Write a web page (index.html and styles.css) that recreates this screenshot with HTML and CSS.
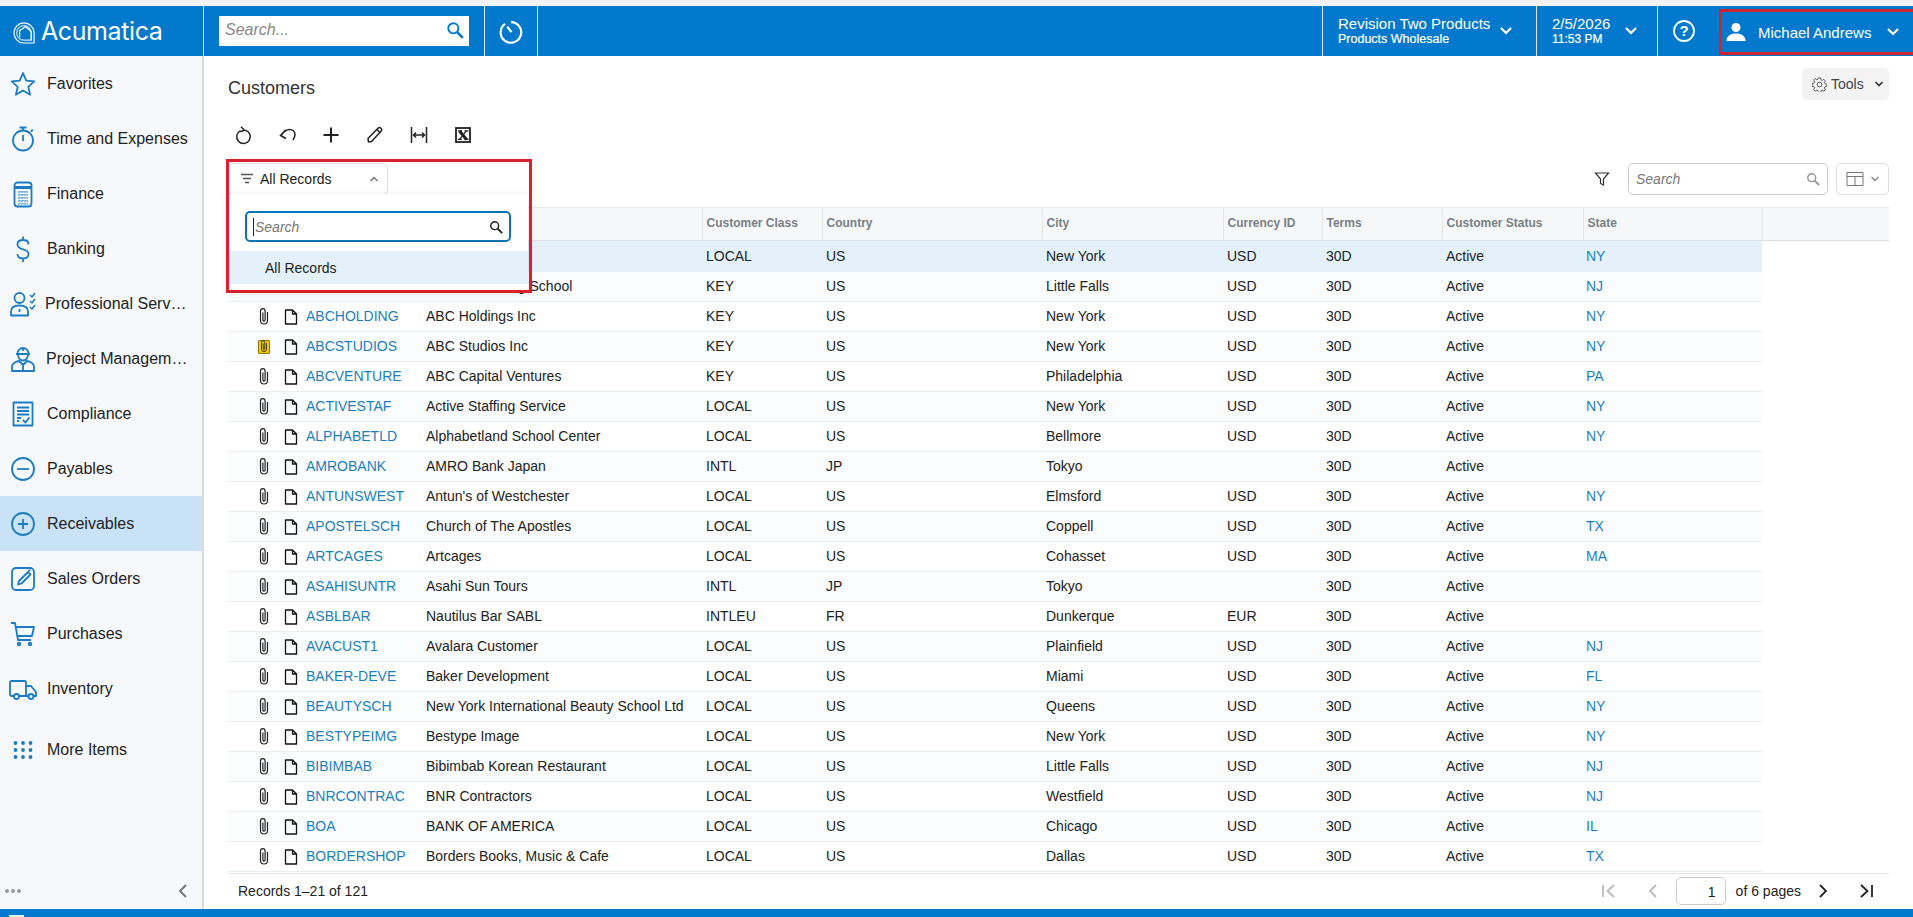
FILE: index.html
```html
<!DOCTYPE html>
<html lang="en">
<head>
<meta charset="utf-8">
<title>Customers</title>
<link rel="stylesheet" href="styles.css">
</head>
<body>
<svg class="defs" aria-hidden="true">
  <symbol id="clip" viewBox="0 0 14 20"><path d="M10.500 6v8.500a3.500 3.500 0 0 1-7 0V5a2.300 2.300 0 0 1 4.600 0v9a1.100 1.100 0 0 1-2.200 0V6.500" fill="none" stroke="currentColor" stroke-width="1.200"/></symbol>
  <symbol id="doc" viewBox="0 0 14 16"><path d="M1.500 1h7l4 4v10h-11zM8.500 1v4h4" fill="none" stroke="currentColor" stroke-width="1.300" stroke-linejoin="round"/></symbol>
  <symbol id="chev" viewBox="0 0 14 10"><path d="M2 2l5 5 5-5" fill="none" stroke="currentColor" stroke-width="2.200"/></symbol>
  <symbol id="mag" viewBox="0 0 16 16"><circle cx="6.500" cy="6.500" r="4.500" fill="none" stroke="currentColor" stroke-width="1.700"/><path d="M10 10l5 5" stroke="currentColor" stroke-width="2.200"/></symbol>
</svg>

<div class="strip"></div>
<header class="topbar">
  <div class="logo">
    <svg class="logo-mark" viewBox="0 0 24 26"><g fill="none" stroke="#fff" stroke-width="1.200"><path d="M22 25H11A10.500 10.500 0 1 1 22 14z"/><path d="M19 22H11.500A7.600 7.600 0 1 1 19 14z" opacity=".8"/><path d="M7 19v-7l6-4 6 5v9"/></g></svg>
    <span class="logo-text">Acumatica</span>
  </div>
  <div class="top-search"><span class="top-search-text">Search...</span><svg class="top-mag"><use href="#mag"/></svg></div>
  <div class="top-history">
    <svg viewBox="0 0 24 24" width="26" height="26"><path d="M6.500 5.500a9.500 9.500 0 1 0 5.500-1.700" fill="none" stroke="#fff" stroke-width="2"/><path d="M8.500 8l4 5" fill="none" stroke="#fff" stroke-width="2"/></svg>
  </div>
  <div class="top-spacer"></div>
  <div class="top-cell cell-branch">
    <div class="two-line"><span class="line-big">Revision Two Products</span><span class="line-small">Products Wholesale</span></div>
    <svg class="chev"><use href="#chev"/></svg>
  </div>
  <div class="top-cell cell-date">
    <div class="two-line"><span class="line-big">2/5/2026</span><span class="line-tiny">11:53 PM</span></div>
    <svg class="chev"><use href="#chev"/></svg>
  </div>
  <div class="top-cell cell-help">
    <svg viewBox="0 0 24 24" width="24" height="24"><circle cx="12" cy="12" r="10" fill="none" stroke="#fff" stroke-width="1.800"/><text x="12" y="17" class="help-q">?</text></svg>
  </div>
  <div class="cell-user">
    <svg viewBox="0 0 22 22" width="22" height="22"><circle cx="11" cy="6.500" r="4.500" fill="#fff"/><path d="M1.500 20c0-5 4-7.500 9.500-7.500s9.500 2.500 9.500 7.500z" fill="#fff"/></svg>
    <span class="user-name">Michael Andrews</span>
    <svg class="chev"><use href="#chev"/></svg>
  </div>
</header>

<div class="main">
  <nav class="sidebar">
    <div class="nav-list">
      <a class="nav-item"><span class="nav-icon"><svg viewBox="0 0 28 28"><path d="M14 3l3.300 7.600 8 .8-6 5.400 1.800 8L14 20.600l-7.100 4.200 1.800-8-6-5.400 8-.8z"/></svg></span><span class="nav-label">Favorites</span></a>
      <a class="nav-item"><span class="nav-icon"><svg viewBox="0 0 28 28"><circle cx="14" cy="15.500" r="10"/><path d="M10.500 2.500h7M14 2.500v3M14 10v6M22 6.500l1.800-1.800"/></svg></span><span class="nav-label">Time and Expenses</span></a>
      <a class="nav-item"><span class="nav-icon"><svg viewBox="0 0 28 28"><rect x="5.500" y="2.500" width="17" height="24" rx="3"/><path d="M6 7.500h16" stroke-width="3"/><path d="M9 12h10M9 15h10M9 18h10M9 21h10M9 24h10M11 11v13M14 11v13M17 11v13" stroke-width="1" stroke-dasharray="1.500 1.500"/></svg></span><span class="nav-label">Finance</span></a>
      <a class="nav-item"><span class="nav-icon"><svg viewBox="0 0 28 28"><path d="M19.500 9.500c0-3-2.500-4.500-5.500-4.500S8.500 6.500 8.500 9.500c0 6.500 11 3.500 11 9.500 0 3-2.500 4.500-5.500 4.500S8.500 22 8.500 19M14 1.500V5M14 23.500V27"/></svg></span><span class="nav-label">Banking</span></a>
      <a class="nav-item nav-tight"><span class="nav-icon"><svg viewBox="0 0 28 28"><circle cx="10.500" cy="8" r="5"/><path d="M2 25.500v-4c0-4 3.500-6 8.500-6s8.500 2 8.500 6v4zM10.500 19v3"/><path d="M21 5l2 2 3-4M21 11l2 2 3-4M21 17l2 2 3-4" stroke-width="1.500"/></svg></span><span class="nav-label">Professional Serv…</span></a>
      <a class="nav-item nav-mid"><span class="nav-icon"><svg viewBox="0 0 28 28"><path d="M8.500 8.500a5.500 5.500 0 0 1 11 0M7 9h14M9 9.500c0 3.500 2.300 6 5 6s5-2.500 5-6M3 26v-4.500c0-3 4-5 7-5.500l4 4 4-4c3 .5 7 2.500 7 5.500V26zM14 20v6M14 3v3"/></svg></span><span class="nav-label">Project Managem…</span></a>
      <a class="nav-item"><span class="nav-icon"><svg viewBox="0 0 28 28"><rect x="4.500" y="2.500" width="19" height="23"/><path d="M8 7.500h12M8 11h12M8 14.500h12M8 18h4M8 21h2M14 20l2.500 2.500 4-5"/></svg></span><span class="nav-label">Compliance</span></a>
      <a class="nav-item"><span class="nav-icon"><svg viewBox="0 0 28 28"><circle cx="14" cy="14" r="11"/><path d="M8 14h12"/></svg></span><span class="nav-label">Payables</span></a>
      <a class="nav-item nav-active"><span class="nav-icon"><svg viewBox="0 0 28 28"><circle cx="14" cy="14" r="11"/><path d="M9 14h10M14 9v10"/></svg></span><span class="nav-label">Receivables</span></a>
      <a class="nav-item"><span class="nav-icon"><svg viewBox="0 0 28 28"><rect x="3" y="3" width="22" height="22" rx="4"/><path d="M9 19.500l1-3.500 9-9 2.500 2.500-9 9zM19 6l2.500-1" /></svg></span><span class="nav-label">Sales Orders</span></a>
      <a class="nav-item"><span class="nav-icon"><svg viewBox="0 0 28 28"><path d="M2 3h4l3 17h13M7 7h18l-2 9H8.500"/><circle cx="10" cy="24" r="1.300"/><circle cx="21" cy="24" r="1.300"/></svg></span><span class="nav-label">Purchases</span></a>
      <a class="nav-item"><span class="nav-icon"><svg viewBox="0 0 28 28"><path d="M5 21H2.500A1.500 1.500 0 0 1 1 19.500V7.500A1.500 1.500 0 0 1 2.500 6h13a1.500 1.500 0 0 1 1.500 1.500V21h-7M17 11h5l5 6v4h-2.500M17 21h2.500"/><circle cx="7.500" cy="21.500" r="2.500"/><circle cx="22" cy="21.500" r="2.500"/></svg></span><span class="nav-label">Inventory</span></a>
      <a class="nav-item nav-more"><span class="nav-icon"><svg viewBox="0 0 28 28"><g class="dots"><circle cx="6.500" cy="7" r="1.900"/><circle cx="14" cy="7" r="1.900"/><circle cx="21.500" cy="7" r="1.900"/><circle cx="6.500" cy="14" r="1.900"/><circle cx="14" cy="14" r="1.900"/><circle cx="21.500" cy="14" r="1.900"/><circle cx="6.500" cy="21" r="1.900"/><circle cx="14" cy="21" r="1.900"/><circle cx="21.500" cy="21" r="1.900"/></g></svg></span><span class="nav-label">More Items</span></a>
    </div>
    <div class="nav-foot">
      <span class="foot-dots"><i></i><i></i><i></i></span>
      <svg viewBox="0 0 10 16" width="10" height="16"><path d="M8 2L2 8l6 6" fill="none" stroke="#777" stroke-width="2"/></svg>
    </div>
  </nav>

  <section class="content">
    <div class="title-row">
      <h1 class="page-title">Customers</h1>
      <button class="tools-btn">
        <svg viewBox="0 0 16 16" width="15" height="15"><g fill="none" stroke="#555" stroke-width="1"><circle cx="8" cy="8" r="2.500"/><path d="M6.800 1h2.400l.4 2 1.300.6 1.700-1.100 1.700 1.700-1.100 1.700.6 1.300 2 .4v2.400l-2 .4-.6 1.300 1.100 1.700-1.700 1.700-1.700-1.100-1.300.6-.4 2H6.800l-.4-2-1.300-.6-1.700 1.100-1.700-1.700 1.100-1.700-.6-1.300-2-.4V6.800l2-.4.6-1.300-1.100-1.700 1.700-1.700 1.700 1.100 1.300-.6z"/></g></svg>
        <span>Tools</span>
        <svg class="mini-chev tools-chev" viewBox="0 0 10 6"><path d="M1.500 1l3.500 3.500L8.500 1" fill="none" stroke="#333" stroke-width="1.700"/></svg>
      </button>
    </div>
    <div class="toolbar">
      <span class="tb-btn"><svg viewBox="0 0 20 20"><path d="M7.500 5.600a6.800 6.800 0 1 0 5-.4M8 1.800l3.500 3.500-4 1.500"/></svg></span>
      <span class="tb-btn"><svg viewBox="0 0 20 20"><path d="M4 10.500C7 6 10 4.500 12.500 4.500 16 4.500 18 7 18 9.500c0 2-1 4-2 5.500M8.500 5L3.500 10.500 9 13.500"/></svg></span>
      <span class="tb-btn"><svg viewBox="0 0 20 20"><path d="M10 2.500v15M2.500 10h15" stroke-width="2"/></svg></span>
      <span class="tb-btn"><svg viewBox="0 0 20 20"><path d="M3.500 17l-.5-3.500L13 3.200c1-1 2-1 3 0s1 2 0 3L6.500 16.500zM12 4.500l3.500 3.500"/></svg></span>
      <span class="tb-btn"><svg viewBox="0 0 20 20"><path d="M2.500 2v16M17.500 2v16M4.500 10h11M7 7.500L4.500 10 7 12.500M13 7.500l2.500 2.500-2.500 2.500"/></svg></span>
      <span class="tb-btn"><svg viewBox="0 0 20 20"><rect x="3" y="3" width="14" height="14" stroke-width="1.800"/><path d="M6.500 6l7 8.500" stroke-width="3"/><path d="M13.500 5.800l-7 8.500M5 5.800h4M11.500 5.800h4M4.800 14.400h4M11.500 14.400h4" stroke-width="1.200"/></svg></span>
    </div>
    <div class="filter-row">
      <div class="filter-tab">
        <svg viewBox="0 0 14 12" width="14" height="12"><path d="M1 1.500h12M3 5.500h8M5 9.500h4" stroke="#555" stroke-width="1.400"/></svg>
        <span class="filter-label">All Records</span>
        <svg class="mini-chev up" viewBox="0 0 10 6"><path d="M1.500 5L5 1.500 8.500 5" fill="none" stroke="#777" stroke-width="1.500"/></svg>
      </div>
      <div class="filter-tools">
        <svg class="funnel" viewBox="0 0 16 16"><path d="M1.500 2h13l-5 6v6l-3-1.500V8z" fill="none" stroke="#333" stroke-width="1.200"/></svg>
        <div class="grid-search"><span>Search</span><svg class="grey-mag"><use href="#mag"/></svg></div>
        <div class="col-btn">
          <svg viewBox="0 0 18 16" width="18" height="16"><path d="M1 1.500h16v13H1zM1 5.500h16M9 5.500v9" fill="none" stroke="#777" stroke-width="1"/></svg>
          <svg class="mini-chev" viewBox="0 0 10 6"><path d="M1.500 1l3.500 3.500L8.500 1" fill="none" stroke="#888" stroke-width="1.300"/></svg>
        </div>
      </div>
    </div>

    <div class="grid">
      <div class="grid-head">
        <table class="tbl head-tbl">
          <colgroup><col class="c-clip"><col class="c-doc"><col class="c-id"><col class="c-name"><col class="c-class"><col class="c-country"><col class="c-city"><col class="c-cur"><col class="c-terms"><col class="c-status"><col class="c-state"></colgroup>
          <tr><th></th><th></th><th></th><th></th><th>Customer Class</th><th>Country</th><th>City</th><th>Currency ID</th><th>Terms</th><th>Customer Status</th><th>State</th></tr>
        </table>
      </div>
      <table class="tbl body-tbl">
        <colgroup><col class="c-clip"><col class="c-doc"><col class="c-id"><col class="c-name"><col class="c-class"><col class="c-country"><col class="c-city"><col class="c-cur"><col class="c-terms"><col class="c-status"><col class="c-state"></colgroup>
        <tr class="sel"><td class="ic"></td><td class="ic"></td><td class="lnk">AACUSTOMER</td><td>AA Customer</td><td>LOCAL</td><td>US</td><td>New York</td><td>USD</td><td>30D</td><td>Active</td><td class="lnk">NY</td></tr>
        <tr><td class="ic"></td><td class="ic"></td><td class="lnk">ABARTENDE</td><td>USA Bartending School</td><td>KEY</td><td>US</td><td>Little Falls</td><td>USD</td><td>30D</td><td>Active</td><td class="lnk">NJ</td></tr>
        <tr><td class="ic"><svg class="i-clip"><use href="#clip"/></svg></td><td class="ic"><svg class="i-doc"><use href="#doc"/></svg></td><td class="lnk">ABCHOLDING</td><td>ABC Holdings Inc</td><td>KEY</td><td>US</td><td>New York</td><td>USD</td><td>30D</td><td>Active</td><td class="lnk">NY</td></tr>
        <tr><td class="ic"><span class="clip-flag"><svg class="i-clip"><use href="#clip"/></svg></span></td><td class="ic"><svg class="i-doc"><use href="#doc"/></svg></td><td class="lnk">ABCSTUDIOS</td><td>ABC Studios Inc</td><td>KEY</td><td>US</td><td>New York</td><td>USD</td><td>30D</td><td>Active</td><td class="lnk">NY</td></tr>
        <tr><td class="ic"><svg class="i-clip"><use href="#clip"/></svg></td><td class="ic"><svg class="i-doc"><use href="#doc"/></svg></td><td class="lnk">ABCVENTURE</td><td>ABC Capital Ventures</td><td>KEY</td><td>US</td><td>Philadelphia</td><td>USD</td><td>30D</td><td>Active</td><td class="lnk">PA</td></tr>
        <tr><td class="ic"><svg class="i-clip"><use href="#clip"/></svg></td><td class="ic"><svg class="i-doc"><use href="#doc"/></svg></td><td class="lnk">ACTIVESTAF</td><td>Active Staffing Service</td><td>LOCAL</td><td>US</td><td>New York</td><td>USD</td><td>30D</td><td>Active</td><td class="lnk">NY</td></tr>
        <tr><td class="ic"><svg class="i-clip"><use href="#clip"/></svg></td><td class="ic"><svg class="i-doc"><use href="#doc"/></svg></td><td class="lnk">ALPHABETLD</td><td>Alphabetland School Center</td><td>LOCAL</td><td>US</td><td>Bellmore</td><td>USD</td><td>30D</td><td>Active</td><td class="lnk">NY</td></tr>
        <tr><td class="ic"><svg class="i-clip"><use href="#clip"/></svg></td><td class="ic"><svg class="i-doc"><use href="#doc"/></svg></td><td class="lnk">AMROBANK</td><td>AMRO Bank Japan</td><td>INTL</td><td>JP</td><td>Tokyo</td><td></td><td>30D</td><td>Active</td><td class="lnk"></td></tr>
        <tr><td class="ic"><svg class="i-clip"><use href="#clip"/></svg></td><td class="ic"><svg class="i-doc"><use href="#doc"/></svg></td><td class="lnk">ANTUNSWEST</td><td>Antun's of Westchester</td><td>LOCAL</td><td>US</td><td>Elmsford</td><td>USD</td><td>30D</td><td>Active</td><td class="lnk">NY</td></tr>
        <tr><td class="ic"><svg class="i-clip"><use href="#clip"/></svg></td><td class="ic"><svg class="i-doc"><use href="#doc"/></svg></td><td class="lnk">APOSTELSCH</td><td>Church of The Apostles</td><td>LOCAL</td><td>US</td><td>Coppell</td><td>USD</td><td>30D</td><td>Active</td><td class="lnk">TX</td></tr>
        <tr><td class="ic"><svg class="i-clip"><use href="#clip"/></svg></td><td class="ic"><svg class="i-doc"><use href="#doc"/></svg></td><td class="lnk">ARTCAGES</td><td>Artcages</td><td>LOCAL</td><td>US</td><td>Cohasset</td><td>USD</td><td>30D</td><td>Active</td><td class="lnk">MA</td></tr>
        <tr><td class="ic"><svg class="i-clip"><use href="#clip"/></svg></td><td class="ic"><svg class="i-doc"><use href="#doc"/></svg></td><td class="lnk">ASAHISUNTR</td><td>Asahi Sun Tours</td><td>INTL</td><td>JP</td><td>Tokyo</td><td></td><td>30D</td><td>Active</td><td class="lnk"></td></tr>
        <tr><td class="ic"><svg class="i-clip"><use href="#clip"/></svg></td><td class="ic"><svg class="i-doc"><use href="#doc"/></svg></td><td class="lnk">ASBLBAR</td><td>Nautilus Bar SABL</td><td>INTLEU</td><td>FR</td><td>Dunkerque</td><td>EUR</td><td>30D</td><td>Active</td><td class="lnk"></td></tr>
        <tr><td class="ic"><svg class="i-clip"><use href="#clip"/></svg></td><td class="ic"><svg class="i-doc"><use href="#doc"/></svg></td><td class="lnk">AVACUST1</td><td>Avalara Customer</td><td>LOCAL</td><td>US</td><td>Plainfield</td><td>USD</td><td>30D</td><td>Active</td><td class="lnk">NJ</td></tr>
        <tr><td class="ic"><svg class="i-clip"><use href="#clip"/></svg></td><td class="ic"><svg class="i-doc"><use href="#doc"/></svg></td><td class="lnk">BAKER-DEVE</td><td>Baker Development</td><td>LOCAL</td><td>US</td><td>Miami</td><td>USD</td><td>30D</td><td>Active</td><td class="lnk">FL</td></tr>
        <tr><td class="ic"><svg class="i-clip"><use href="#clip"/></svg></td><td class="ic"><svg class="i-doc"><use href="#doc"/></svg></td><td class="lnk">BEAUTYSCH</td><td>New York International Beauty School Ltd</td><td>LOCAL</td><td>US</td><td>Queens</td><td>USD</td><td>30D</td><td>Active</td><td class="lnk">NY</td></tr>
        <tr><td class="ic"><svg class="i-clip"><use href="#clip"/></svg></td><td class="ic"><svg class="i-doc"><use href="#doc"/></svg></td><td class="lnk">BESTYPEIMG</td><td>Bestype Image</td><td>LOCAL</td><td>US</td><td>New York</td><td>USD</td><td>30D</td><td>Active</td><td class="lnk">NY</td></tr>
        <tr><td class="ic"><svg class="i-clip"><use href="#clip"/></svg></td><td class="ic"><svg class="i-doc"><use href="#doc"/></svg></td><td class="lnk">BIBIMBAB</td><td>Bibimbab Korean Restaurant</td><td>LOCAL</td><td>US</td><td>Little Falls</td><td>USD</td><td>30D</td><td>Active</td><td class="lnk">NJ</td></tr>
        <tr><td class="ic"><svg class="i-clip"><use href="#clip"/></svg></td><td class="ic"><svg class="i-doc"><use href="#doc"/></svg></td><td class="lnk">BNRCONTRAC</td><td>BNR Contractors</td><td>LOCAL</td><td>US</td><td>Westfield</td><td>USD</td><td>30D</td><td>Active</td><td class="lnk">NJ</td></tr>
        <tr><td class="ic"><svg class="i-clip"><use href="#clip"/></svg></td><td class="ic"><svg class="i-doc"><use href="#doc"/></svg></td><td class="lnk">BOA</td><td>BANK OF AMERICA</td><td>LOCAL</td><td>US</td><td>Chicago</td><td>USD</td><td>30D</td><td>Active</td><td class="lnk">IL</td></tr>
        <tr><td class="ic"><svg class="i-clip"><use href="#clip"/></svg></td><td class="ic"><svg class="i-doc"><use href="#doc"/></svg></td><td class="lnk">BORDERSHOP</td><td>Borders Books, Music &amp; Cafe</td><td>LOCAL</td><td>US</td><td>Dallas</td><td>USD</td><td>30D</td><td>Active</td><td class="lnk">TX</td></tr>
      </table>
    </div>

    <div class="pager">
      <span class="rec-count">Records 1–21 of 121</span>
      <div class="pager-nav">
        <svg class="pg pg-first" viewBox="0 0 16 16"><path d="M2 2v12M13 2L6.500 8l6.500 6" fill="none" stroke="#bbb" stroke-width="1.800"/></svg>
        <svg class="pg pg-prev" viewBox="0 0 16 16"><path d="M11 2L5 8l6 6" fill="none" stroke="#bbb" stroke-width="1.800"/></svg>
        <span class="pg-input">1</span>
        <span class="pg-text">of 6 pages</span>
        <svg class="pg pg-next" viewBox="0 0 16 16"><path d="M5 2l6 6-6 6" fill="none" stroke="#222" stroke-width="1.800"/></svg>
        <svg class="pg pg-last" viewBox="0 0 16 16"><path d="M2 2l6.500 6L2 14M13 2v12" fill="none" stroke="#222" stroke-width="1.800"/></svg>
      </div>
    </div>

    <div class="dropdown">
      <div class="dd-search"><span class="caret"></span><span>Search</span><svg class="dd-mag"><use href="#mag"/></svg></div>
      <div class="dd-item">All Records</div>
    </div>
    <div class="red-box"></div>
  </section>
</div>
<footer class="bottombar"><span class="bottom-tab"></span></footer>
</body>
</html>
```
FILE: styles.css
```css
* { box-sizing: border-box; }
html, body { height: 100%; }
body {
  margin: 0;
  height: 917px;
  overflow: hidden;
  display: flex;
  flex-direction: column;
  font-family: "Liberation Sans", Arial, sans-serif;
  font-size: 14px;
  color: #222;
  background: #fff;
}
.defs { width: 0; height: 0; position: absolute; }

.strip { height: 6px; background: #f4f4f4; flex: none; }

/* Top bar */
.topbar {
  flex: none;
  height: 50px;
  background: #0279cc;
  color: #fff;
  display: flex;
  align-items: stretch;
}
.logo {
  width: 204px;
  border-right: 1px solid #d8e8f4;
  display: flex;
  align-items: center;
  padding-left: 13px;
  gap: 5px;
}
.logo-mark { width: 23px; height: 25px; }
.logo-text { font-family: "Inter", "Liberation Sans", sans-serif; font-size: 25px; letter-spacing: -.4px; font-weight: 400; }
.top-search {
  align-self: center;
  margin-left: 15px;
  width: 250px;
  height: 30px;
  background: #fff;
  color: #888;
  font-style: italic;
  font-size: 16px;
  display: flex;
  align-items: center;
  justify-content: space-between;
  padding: 0 5px 2px 6px;
}
.top-search-text { line-height: 18px; }
.top-mag { width: 18px; height: 18px; color: #0279cc; margin-bottom: 1px; }
.top-history {
  margin-left: 15px;
  width: 54px;
  border-left: 1px solid #d8e8f4;
  border-right: 1px solid #d8e8f4;
  display: flex;
  align-items: center;
  justify-content: center;
}
.top-spacer { flex: 1; }
.top-cell {
  border-left: 1px solid #d8e8f4;
  display: flex;
  align-items: center;
}
.cell-branch { width: 214px; padding-left: 15px; gap: 9px; }
.cell-date { width: 121px; padding-left: 15px; }
.cell-date .chev { margin-left: 14px; }
.cell-help { width: 53px; justify-content: center; }
.two-line { display: flex; flex-direction: column; }
.line-big { font-size: 15px; line-height: 17px; }
.line-small { font-size: 12.500px; line-height: 15px; -webkit-text-stroke: .2px #fff; }
.line-tiny { font-size: 12px; line-height: 15px; -webkit-text-stroke: .2px #fff; }
.chev { width: 14px; height: 10px; flex: none; }
.help-q { fill: #fff; font-size: 15px; font-weight: 700; text-anchor: middle; font-family: "Liberation Sans", sans-serif; }
.cell-user {
  width: 194px;
  margin-left: 9px;
  margin-top: 3px;
  margin-bottom: 1px;
  border: 3px solid #cf2436;
  border-right: 0;
  display: flex;
  align-items: center;
  padding-left: 3px;
}
.user-name { font-size: 15px; margin-left: 11px; }
.cell-user .chev { margin-left: 15px; }

/* Main */
.main { flex: 1; display: flex; min-height: 0; }

.sidebar {
  flex: none;
  width: 204px;
  background: #f6f8fb;
  border-right: 2px solid #d9dcdf;
  display: flex;
  flex-direction: column;
}
.nav-list { flex: 1; }
.nav-item {
  display: flex;
  align-items: center;
  height: 55px;
  color: #222;
  font-size: 16px;
  padding-left: 9px;
}
.nav-active { background: #c9e2f5; }
.nav-more { margin-top: 6px; }
.nav-icon { width: 28px; height: 28px; margin-right: 10px; flex: none; }
.nav-icon svg {
  display: block;
  width: 28px;
  height: 28px;
  fill: none;
  stroke: #1b7cc4;
  stroke-width: 1.800;
  stroke-linejoin: round;
}
.nav-icon .dots { fill: #1b7cc4; stroke: none; }
.nav-tight .nav-icon { margin-right: 8px; }
.nav-mid .nav-icon { margin-right: 9px; }
.nav-label { white-space: nowrap; }
.nav-foot {
  height: 36px;
  display: flex;
  align-items: center;
  justify-content: space-between;
  padding: 0 14px 0 5px;
}
.foot-dots { display: flex; gap: 2px; }
.foot-dots i { width: 4px; height: 4px; border-radius: 50%; background: #999; }

/* Content */
.content {
  flex: 1;
  min-width: 0;
  padding: 0 24px 0 24px;
  position: relative;
  display: flex;
  flex-direction: column;
}
.title-row {
  height: 50px;
  padding-top: 12px;
  display: flex;
  justify-content: space-between;
  align-items: flex-start;
}
.page-title { margin: 9px 0 0; font-size: 18px; font-weight: 400; line-height: 22px; color: #333; }
.tools-btn {
  width: 87px;
  height: 32px;
  border: 0;
  border-radius: 5px;
  background: #f3f3f3;
  display: flex;
  align-items: center;
  gap: 4px;
  padding: 0 0 0 10px;
  font: 14px "Liberation Sans", Arial, sans-serif;
  color: #444;
}
.mini-chev { width: 10px; height: 6px; }
.tools-chev { margin-left: 6px; }
.toolbar {
  height: 44px;
  display: flex;
  align-items: center;
  padding-left: 5px;
  margin-top: 7px;
  gap: 24px;
}
.tb-btn { width: 20px; height: 20px; }
.tb-btn svg { display: block; width: 20px; height: 20px; fill: none; stroke: #222; stroke-width: 1.500; }
.filter-row {
  height: 32px;
  margin-top: 6px;
  display: flex;
  justify-content: space-between;
}
.filter-tab {
  width: 160px;
  height: 32px;
  border: 1px solid #dcdcdc;
  border-radius: 5px;
  display: flex;
  align-items: center;
  padding: 0 8px 0 11px;
  gap: 6px;
}
.filter-label { flex: 1; font-size: 14px; color: #222; }
.filter-tools { display: flex; align-items: center; gap: 8px; }
.funnel { width: 16px; height: 16px; margin-right: 10px; }
.grid-search {
  width: 200px;
  height: 32px;
  border: 1px solid #ccc;
  border-radius: 5px;
  display: flex;
  align-items: center;
  justify-content: space-between;
  padding: 0 7px;
  font-style: italic;
  font-size: 14px;
  color: #777;
}
.grey-mag { width: 14px; height: 14px; color: #999; }
.col-btn {
  width: 53px;
  height: 32px;
  border: 1px solid #ddd;
  border-radius: 5px;
  display: flex;
  align-items: center;
  justify-content: center;
  gap: 6px;
}

/* Grid */
.grid { margin-top: 12px; }
.grid-head {
  background: #f5f7f9;
  border-top: 1px solid #e6e8ea;
  border-bottom: 1px solid #dde1e5;
  height: 34px;
}
.tbl { table-layout: fixed; border-collapse: collapse; width: 1534px; }
.c-clip { width: 50px; }
.c-doc { width: 25px; }
.c-id { width: 119px; }
.c-name { width: 280px; }
.c-class { width: 120px; }
.c-country { width: 220px; }
.c-city { width: 181px; }
.c-cur { width: 99px; }
.c-terms { width: 120px; }
.c-status { width: 141px; }
.c-state { width: 179px; }
.head-tbl th {
  height: 32px;
  padding: 0 4px 2px;
  text-align: left;
  font-size: 12px;
  font-weight: 700;
  color: #7a7f85;
  border-right: 1px solid #e3e6e9;
  white-space: nowrap;
}
.head-tbl th:nth-child(-n+3) { border-right: 0; }
.body-tbl td {
  height: 30px;
  padding: 0 4px;
  font-size: 14px;
  color: #222;
  border-bottom: 1px solid #e6eef6;
  white-space: nowrap;
  overflow: hidden;
}
.body-tbl tr:nth-child(even) td { background: #fbfcfe; }
.body-tbl tr.sel td { background: #e4f1fa; }
.body-tbl td.lnk { color: #1b7fbd; padding-left: 3px; }
.body-tbl td.ic { padding: 0; text-align: right; padding-right: 2px; }
.body-tbl td.ic:first-child { padding-right: 7px; }
.i-clip { width: 14px; height: 20px; vertical-align: middle; color: #222; }
.clip-flag { display: inline-block; width: 12px; height: 14px; background: #f2c811; border: 1px solid #8a7a10; border-radius: 1px; line-height: 12px; vertical-align: middle; margin-right: 1px; }
.clip-flag .i-clip { display: block; width: 10px; height: 14px; margin-top: -2px; }
.i-doc { width: 14px; height: 16px; vertical-align: middle; color: #111; margin-right: 3px; }

/* Pager */
.pager {
  flex: 1;
  margin-top: 1px;
  border-top: 1px solid #e2e4e7;
  display: flex;
  align-items: center;
  justify-content: space-between;
  padding: 0 14px 0 10px;
}
.rec-count { font-size: 14px; color: #222; }
.pager-nav { display: flex; align-items: center; }
.pg { width: 16px; height: 16px; }
.pg-prev { margin-left: 28px; }
.pg-input {
  width: 50px;
  height: 28px;
  margin-left: 15px;
  border: 1px solid #ccc;
  border-radius: 5px;
  text-align: right;
  line-height: 28px;
  padding-right: 9px;
  font-size: 14px;
}
.pg-text { margin-left: 10px; font-size: 14px; }
.pg-next { margin-left: 14px; }
.pg-last { margin-left: 28px; }

/* Dropdown overlay */
.dropdown {
  position: absolute;
  left: 24px;
  top: 138px;
  width: 300px;
  height: 96px;
  background: #fff;
  border-radius: 4px;
  box-shadow: 0 2px 10px rgba(0,0,0,.12);
  padding-top: 17px;
  z-index: 2;
}
.dd-search {
  width: 266px;
  height: 31px;
  margin-left: 17px;
  border: 2px solid #0c74b4;
  border-radius: 5px;
  display: flex;
  align-items: center;
  padding: 0 6px;
  font-style: italic;
  color: #777;
  font-size: 14px;
}
.caret { width: 1px; height: 18px; background: #222; margin-right: 1px; }
.dd-mag { width: 14px; height: 14px; color: #222; margin-left: auto; }
.dd-item {
  margin-top: 9px;
  height: 33px;
  line-height: 35px;
  background: #e4f1fa;
  padding-left: 37px;
  font-size: 14px;
  color: #222;
}
.red-box {
  position: absolute;
  left: 22px;
  top: 103px;
  width: 306px;
  height: 134px;
  border: 3px solid #d9202e;
  z-index: 3;
  pointer-events: none;
}

.bottombar { flex: none; height: 8px; background: #0279cc; padding-left: 9px; }
.bottom-tab { display: block; width: 15px; height: 8px; margin-top: 6px; background: #e8f2fa; }
```
